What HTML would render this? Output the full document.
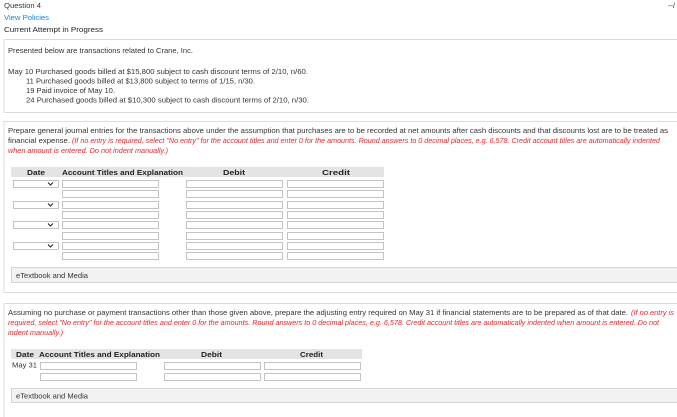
<!DOCTYPE html>
<html><head><meta charset="utf-8"><style>
html,body{margin:0;padding:0;background:#fff;}
svg{display:block;font-family:"Liberation Sans",sans-serif;}
.t{font-size:7.4px;fill:#333;}
.r{font-size:7.4px;fill:#e8262b;font-style:italic;}
.h{font-size:7.2px;font-weight:bold;fill:#222;}
.in{fill:#fff;stroke:#b5b5b5;stroke-width:0.8;}
</style></head><body>
<svg width="677" height="417" viewBox="0 0 677 417" xmlns="http://www.w3.org/2000/svg">
<text class="t" x="4" y="8" textLength="37" lengthAdjust="spacingAndGlyphs">Question 4</text>
<text class="t" x="668" y="8" fill="#666">--/</text>
<text class="t" x="4" y="20" textLength="45" lengthAdjust="spacingAndGlyphs" style="fill:#1a86d8">View Policies</text>
<text class="t" x="4" y="32" textLength="99" lengthAdjust="spacingAndGlyphs" style="fill:#222">Current Attempt in Progress</text>

<rect x="4" y="39.5" width="680" height="73" fill="#fff" stroke="#dcdcdc"/>
<text class="t" x="8" y="53" textLength="185" lengthAdjust="spacingAndGlyphs">Presented below are transactions related to Crane, Inc.</text>
<text class="t" x="8" y="74" textLength="300" lengthAdjust="spacingAndGlyphs">May 10  Purchased goods billed at $15,800 subject to cash discount terms of 2/10, n/60.</text>
<text class="t" x="26" y="83.5" textLength="229" lengthAdjust="spacingAndGlyphs">11  Purchased goods billed at $13,800 subject to terms of 1/15, n/30.</text>
<text class="t" x="26" y="93" textLength="89" lengthAdjust="spacingAndGlyphs">19  Paid invoice of May 10.</text>
<text class="t" x="26" y="102.5" textLength="283" lengthAdjust="spacingAndGlyphs">24  Purchased goods billed at $10,300 subject to cash discount terms of 2/10, n/30.</text>

<rect x="4" y="121.5" width="680" height="171" fill="#fff" stroke="#dcdcdc"/>
<text class="t" x="8" y="133" textLength="660" lengthAdjust="spacingAndGlyphs">Prepare general journal entries for the transactions above under the assumption that purchases are to be recorded at net amounts after cash discounts and that discounts lost are to be treated as</text>
<text class="t" x="8" y="143" textLength="62" lengthAdjust="spacingAndGlyphs">financial expense.</text>
<text class="r" x="72" y="143" textLength="588" lengthAdjust="spacingAndGlyphs">(If no entry is required, select "No entry" for the account titles and enter 0 for the amounts. Round answers to 0 decimal places, e.g. 6,578. Credit account titles are automatically indented</text>
<text class="r" x="8" y="153" textLength="160" lengthAdjust="spacingAndGlyphs">when amount is entered. Do not indent manually.)</text>

<rect x="11" y="167" width="373" height="10" fill="#e4e4e4"/>
<text class="h" x="27" y="175" textLength="18" lengthAdjust="spacingAndGlyphs">Date</text>
<text class="h" x="62" y="175" textLength="121" lengthAdjust="spacingAndGlyphs">Account Titles and Explanation</text>
<text class="h" x="223" y="175" textLength="22" lengthAdjust="spacingAndGlyphs">Debit</text>
<text class="h" x="322" y="175" textLength="28" lengthAdjust="spacingAndGlyphs">Credit</text>
<g>
<rect class="in" x="13.5" y="180.5" width="45" height="7"/><path d="M48 182.5l2.5 2.5 2.5-2.5" fill="none" stroke="#222" stroke-width="1"/>
<rect class="in" x="13.5" y="201.5" width="45" height="7"/><path d="M48 203.5l2.5 2.5 2.5-2.5" fill="none" stroke="#222" stroke-width="1"/>
<rect class="in" x="13.5" y="221.5" width="45" height="7"/><path d="M48 223.5l2.5 2.5 2.5-2.5" fill="none" stroke="#222" stroke-width="1"/>
<rect class="in" x="13.5" y="242.5" width="45" height="7"/><path d="M48 244.5l2.5 2.5 2.5-2.5" fill="none" stroke="#222" stroke-width="1"/>
</g>
<g>
<rect class="in" x="62.5" y="180.5" width="96" height="7"/><rect class="in" x="186.5" y="180.5" width="96" height="7"/><rect class="in" x="287.5" y="180.5" width="96" height="7"/>
<rect class="in" x="62.5" y="190.5" width="96" height="7"/><rect class="in" x="186.5" y="190.5" width="96" height="7"/><rect class="in" x="287.5" y="190.5" width="96" height="7"/>
<rect class="in" x="62.5" y="201.5" width="96" height="7"/><rect class="in" x="186.5" y="201.5" width="96" height="7"/><rect class="in" x="287.5" y="201.5" width="96" height="7"/>
<rect class="in" x="62.5" y="211.5" width="96" height="7"/><rect class="in" x="186.5" y="211.5" width="96" height="7"/><rect class="in" x="287.5" y="211.5" width="96" height="7"/>
<rect class="in" x="62.5" y="221.5" width="96" height="7"/><rect class="in" x="186.5" y="221.5" width="96" height="7"/><rect class="in" x="287.5" y="221.5" width="96" height="7"/>
<rect class="in" x="62.5" y="232.5" width="96" height="7"/><rect class="in" x="186.5" y="232.5" width="96" height="7"/><rect class="in" x="287.5" y="232.5" width="96" height="7"/>
<rect class="in" x="62.5" y="242.5" width="96" height="7"/><rect class="in" x="186.5" y="242.5" width="96" height="7"/><rect class="in" x="287.5" y="242.5" width="96" height="7"/>
<rect class="in" x="62.5" y="252.5" width="96" height="7"/><rect class="in" x="186.5" y="252.5" width="96" height="7"/><rect class="in" x="287.5" y="252.5" width="96" height="7"/>
</g>
<rect x="11.5" y="267.5" width="670" height="15" fill="#f2f2f2" stroke="#d4d4d4"/>
<text class="t" x="16" y="278" textLength="72" lengthAdjust="spacingAndGlyphs">eTextbook and Media</text>

<rect x="4" y="303.5" width="680" height="120" fill="#fff" stroke="#dcdcdc"/>
<text class="t" x="8" y="315" textLength="620" lengthAdjust="spacingAndGlyphs">Assuming no purchase or payment transactions other than those given above, prepare the adjusting entry required on May 31 if financial statements are to be prepared as of that date.</text>
<text class="r" x="631" y="315" textLength="43" lengthAdjust="spacingAndGlyphs">(If no entry is</text>
<text class="r" x="8" y="325" textLength="651" lengthAdjust="spacingAndGlyphs">required, select "No entry" for the account titles and enter 0 for the amounts. Round answers to 0 decimal places, e.g. 6,578. Credit account titles are automatically indented when amount is entered. Do not</text>
<text class="r" x="8" y="335" textLength="55" lengthAdjust="spacingAndGlyphs">indent manually.)</text>

<rect x="11" y="349" width="351" height="10" fill="#e4e4e4"/>
<text class="h" x="16" y="357" textLength="18" lengthAdjust="spacingAndGlyphs">Date</text>
<text class="h" x="39" y="357" textLength="121" lengthAdjust="spacingAndGlyphs">Account Titles and Explanation</text>
<text class="h" x="201" y="357" textLength="21" lengthAdjust="spacingAndGlyphs">Debit</text>
<text class="h" x="300" y="357" textLength="23" lengthAdjust="spacingAndGlyphs">Credit</text>
<text class="t" x="12" y="367.5" textLength="25" lengthAdjust="spacingAndGlyphs">May 31</text>
<rect class="in" x="40.5" y="362.5" width="96" height="7"/><rect class="in" x="164.5" y="362.5" width="96" height="7"/><rect class="in" x="264.5" y="362.5" width="96" height="7"/>
<rect class="in" x="40.5" y="373.5" width="96" height="7"/><rect class="in" x="164.5" y="373.5" width="96" height="7"/><rect class="in" x="264.5" y="373.5" width="96" height="7"/>
<rect x="11.5" y="388.5" width="670" height="14" fill="#f2f2f2" stroke="#d4d4d4"/>
<text class="t" x="16" y="398.5" textLength="72" lengthAdjust="spacingAndGlyphs">eTextbook and Media</text>
</svg>
</body></html>
